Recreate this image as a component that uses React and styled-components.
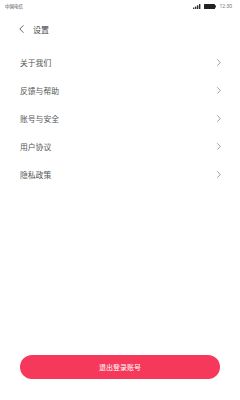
import React from "react";
import styled, { createGlobalStyle } from "styled-components";

const Global = createGlobalStyle`
  html, body { margin: 0; padding: 0; background: #fff; }
  body { font-family: "Noto Sans CJK SC", "Noto Sans", sans-serif; }
  * { box-sizing: border-box; }
`;

const Page = styled.div`
  width: 240px;
  height: 400px;
  display: flex;
  flex-direction: column;
  background: #fff;
`;

const StatusBar = styled.div`
  height: 12px;
  display: flex;
  align-items: center;
  justify-content: space-between;
  padding: 0 8px 0 5px;
  font-size: 4.5px;
  color: #444;
`;

const StatusRight = styled.div`
  display: flex;
  align-items: center;
  gap: 3px;
`;

const Time = styled.span`
  font-family: "Roboto", sans-serif;
  font-size: 5px;
  color: #777;
  margin-left: 1px;
`;

const Header = styled.div`
  height: 34px;
  display: flex;
  align-items: center;
  padding: 0 0 0 19px;
  gap: 9px;
`;

const Title = styled.span`
  font-size: 8px;
  color: #444;
`;

const List = styled.div`
  display: flex;
  flex-direction: column;
  margin-top: 2px;
`;

const Row = styled.div`
  height: 28px;
  display: flex;
  align-items: center;
  justify-content: space-between;
  padding: 0 19px 0 20px;
`;

const Label = styled.span`
  font-size: 7.8px;
  color: #555;
`;

const Spacer = styled.div`
  flex: 1;
`;

const Footer = styled.div`
  padding: 0 20px 21px;
`;

const Logout = styled.button`
  width: 200px;
  height: 24px;
  border: none;
  border-radius: 12px;
  background: #f6385a;
  color: #fff;
  font-family: inherit;
  font-size: 7px;
  display: flex;
  align-items: center;
  justify-content: center;
  padding: 0;
`;

const Chevron = ({ color = "#888", w = 4, h = 7 }) => (
  <svg width={w} height={h} viewBox="0 0 4 7" fill="none">
    <path d="M0.6 0.6 L3.3 3.5 L0.6 6.4" stroke={color} strokeWidth="0.8" strokeLinecap="round" strokeLinejoin="round" />
  </svg>
);

const Back = () => (
  <svg width="5" height="8" viewBox="0 0 5 8" fill="none">
    <path d="M4.2 0.6 L0.8 4 L4.2 7.4" stroke="#555" strokeWidth="0.9" strokeLinecap="round" strokeLinejoin="round" />
  </svg>
);

const Signal = () => (
  <svg width="8" height="5" viewBox="0 0 8 5">
    <rect x="0" y="3.5" width="1.4" height="1.5" fill="#333" />
    <rect x="2" y="2.5" width="1.4" height="2.5" fill="#333" />
    <rect x="4" y="1.3" width="1.4" height="3.7" fill="#333" />
    <rect x="6" y="0" width="1.4" height="5" fill="#333" />
  </svg>
);

const Battery = () => (
  <svg width="12" height="5" viewBox="0 0 12 5">
    <rect x="0" y="0" width="11" height="5" rx="0.6" fill="#222" />
    <rect x="11" y="1.5" width="1" height="2" fill="#222" />
  </svg>
);

const items = ["关于我们", "反馈与帮助", "账号与安全", "用户协议", "隐私政策"];

export default function App() {
  return (
    <Page>
      <Global />
      <StatusBar>
        <span>中国电信</span>
        <StatusRight>
          <Signal />
          <Battery />
          <Time>12:30</Time>
        </StatusRight>
      </StatusBar>
      <Header>
        <Back />
        <Title>设置</Title>
      </Header>
      <List>
        {items.map((t) => (
          <Row key={t}>
            <Label>{t}</Label>
            <Chevron />
          </Row>
        ))}
      </List>
      <Spacer />
      <Footer>
        <Logout>退出登录账号</Logout>
      </Footer>
    </Page>
  );
}
